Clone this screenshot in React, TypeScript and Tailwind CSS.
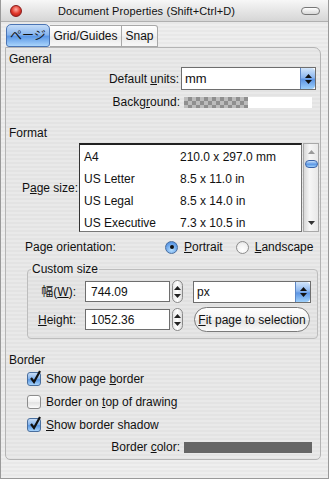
import React from "react";

const stripes =
  "bg-[repeating-linear-gradient(to_bottom,#eeeeee_0px,#eeeeee_2px,#e8e8e8_2px,#e8e8e8_4px)]";

function Up({ c = "#111" }: { c?: string }) {
  return (
    <svg width="7" height="4" viewBox="0 0 7 4">
      <path d="M0 4 L3.5 0 L7 4 Z" fill={c} />
    </svg>
  );
}
function Down({ c = "#111" }: { c?: string }) {
  return (
    <svg width="7" height="4" viewBox="0 0 7 4">
      <path d="M0 0 L3.5 4 L7 0 Z" fill={c} />
    </svg>
  );
}

function AquaArrow() {
  return (
    <div className="w-[15px] self-stretch rounded-r-[4px] border-l border-[#5d87c6] bg-[linear-gradient(to_bottom,#d3e6fb_0%,#8db7ef_45%,#5d95e4_55%,#9ed0fb_100%)] flex flex-col items-center justify-center gap-[2px]">
      <Up />
      <Down />
    </div>
  );
}

function Spinner() {
  return (
    <div className="w-[11px] h-[23px] rounded-full border border-[#8a8a8a] bg-[linear-gradient(to_right,#e8e8e8,#ffffff_50%,#dcdcdc)] flex flex-col items-center justify-center gap-[4px]">
      <Up c="#222" />
      <Down c="#222" />
    </div>
  );
}

function Check({ checked }: { checked: boolean }) {
  return (
    <div
      className={
        "relative w-[14px] h-[14px] rounded-[3px] border " +
        (checked
          ? "border-[#4a6f9e] bg-[linear-gradient(to_bottom,#c7ddf7_0%,#7fb0ea_50%,#5a98e4_55%,#a8d3fa_100%)]"
          : "border-[#8c8c8c] bg-[linear-gradient(to_bottom,#ffffff_0%,#f0f0f0_50%,#e2e2e2_55%,#fafafa_100%)]")
      }
    >
      {checked && (
        <svg
          className="absolute left-[1px] top-[-3px]"
          width="13"
          height="15"
          viewBox="0 0 13 15"
        >
          <path d="M2 8 L5 12 L11 1" stroke="#111" strokeWidth="2.2" fill="none" />
        </svg>
      )}
    </div>
  );
}

function Radio({ on }: { on: boolean }) {
  return (
    <div
      className={
        "w-[13px] h-[13px] rounded-full border flex items-center justify-center " +
        (on
          ? "border-[#4a6f9e] bg-[radial-gradient(circle_at_50%_70%,#b7e0ff_0%,#6aa4ea_60%,#3f7fd6_100%)]"
          : "border-[#8c8c8c] bg-[radial-gradient(circle_at_50%_70%,#ffffff_0%,#f2f2f2_60%,#d8d8d8_100%)]")
      }
    >
      {on && <div className="w-[4px] h-[4px] rounded-full bg-[#111]" />}
    </div>
  );
}

const rows: [string, string][] = [
  ["A4", "210.0 x 297.0 mm"],
  ["US Letter", "8.5 x 11.0 in"],
  ["US Legal", "8.5 x 14.0 in"],
  ["US Executive", "7.3 x 10.5 in"],
];

export default function App() {
  return (
    <div
      className={
        "w-[329px] h-[479px] overflow-hidden border-x border-b border-[#9a9a9a] text-[12px] leading-[14px] text-[#111] font-['Liberation_Sans','Noto_Sans_CJK_JP',sans-serif] flex flex-col " +
        stripes
      }
    >
      {/* title bar */}
      <div className="h-[22px] flex items-center bg-[linear-gradient(to_bottom,#f7f7f7,#e6e6e6_50%,#d6d6d6)] border-b border-[#b0b0b0] shrink-0">
        <div className="ml-[9px] w-[12px] h-[12px] rounded-full border border-[#8a1c1c] bg-[radial-gradient(circle_at_50%_35%,#ffb0a8_0%,#e23b2e_50%,#a8120c_100%)]" />
        <div className="ml-[36px] text-[11px] tracking-[0.1px]">Document Properties (Shift+Ctrl+D)</div>
        <div className="ml-auto mr-[8px] w-[19px] h-[8px] rounded-full border border-[#777] bg-[linear-gradient(to_bottom,#ffffff,#d8d8d8)]" />
      </div>

      {/* tabs */}
      <div className="flex items-end pl-[5px] mt-[2px] h-[23px] shrink-0">
        <div className="h-[23px] w-[44px] rounded-t-[5px] rounded-b-[3px] border border-[#4a74b4] bg-[linear-gradient(to_bottom,#c4dcf8_0%,#8ab6ee_45%,#5c98e6_55%,#a9d4fb_100%)] flex items-center justify-center text-[12px]">
          ページ
        </div>
        <div className="h-[22px] w-[72px] border-y border-r border-[#a8a8a8] bg-[linear-gradient(to_bottom,#ffffff,#f1f1f1_50%,#e9e9e9_55%,#f8f8f8)] flex items-center justify-center">
          Grid/Guides
        </div>
        <div className="h-[22px] w-[36px] border-y border-r border-[#a8a8a8] rounded-tr-[3px] bg-[linear-gradient(to_bottom,#ffffff,#f1f1f1_50%,#e9e9e9_55%,#f8f8f8)] flex items-center justify-center">
          Snap
        </div>
      </div>

      {/* panel */}
      <div
        className={
          "ml-[4px] mr-[7px] h-[413px] border border-[#b4b4b4] rounded-tr-[7px] rounded-b-[5px] flex flex-col shrink-0 bg-[repeating-linear-gradient(to_bottom,#e9e9e9_0px,#e9e9e9_2px,#e3e3e3_2px,#e3e3e3_4px)]"
        }
      >
        <div className="mt-[4px] pl-[3px] h-[14px]">General</div>

        {/* default units */}
        <div className="mt-[1px] h-[23px] flex items-center">
          <div className="w-[175px] text-right pr-[2px]">
            Default <u>u</u>nits:
          </div>
          <div className="w-[135px] h-[23px] border border-[#6e6e6e] bg-white flex items-center">
            <span className="pl-[3px] flex-1 text-[13px]">mm</span>
            <AquaArrow />
          </div>
        </div>

        {/* background */}
        <div className="mt-[6px] h-[12px] flex items-center">
          <div className="w-[178px] text-right pr-[4px]">
            Backg<u>r</u>ound:
          </div>
          <div className="w-[128px] h-[11px] bg-white flex">
            <div className="w-[64px] h-full bg-[conic-gradient(#8f8f8f_25%,#bcbcbc_0_50%,#8f8f8f_0_75%,#bcbcbc_0)] bg-[length:8px_8px]" />
          </div>
        </div>

        <div className="mt-[18px] pl-[3px] h-[14px]">Format</div>

        {/* page size list */}
        <div className="mt-[3px] h-[89px] flex items-center">
          <div className="w-[73px] text-right pr-[1px]">
            P<u>a</u>ge size:
          </div>
          <div className="w-[223px] h-[89px] border border-[#777] border-t-2 border-t-[#222] border-l-[#333] bg-white flex flex-col pt-[1px]">
            {rows.map(([a, b]) => (
              <div key={a} className="h-[22px] flex items-center shrink-0">
                <span className="pl-[4px] w-[100px]">{a}</span>
                <span>{b}</span>
              </div>
            ))}
          </div>
          <div className="ml-[1px] w-[16px] h-[89px] border border-[#a8a8a8] bg-[linear-gradient(to_right,#d8d8d8,#f6f6f6_40%,#e8e8e8)] flex flex-col items-center">
            <div className="mt-[6px]">
              <Up c="#9a9a9a" />
            </div>
            <div className="mt-[6px] w-[13px] h-[8px] rounded-full border border-[#3a63a8] bg-[linear-gradient(to_bottom,#c7e0fb,#5c98e6_55%,#9fd0fb)]" />
            <div className="mt-auto mb-[6px]">
              <Down c="#333" />
            </div>
          </div>
        </div>

        {/* orientation */}
        <div className="mt-[8px] h-[14px] flex items-center">
          <div className="pl-[19px] w-[159px]">Page orientation:</div>
          <Radio on />
          <span className="ml-[6px]">
            <u>P</u>ortrait
          </span>
          <div className="ml-[13px]">
            <Radio on={false} />
          </div>
          <span className="ml-[6px]">
            <u>L</u>andscape
          </span>
        </div>

        {/* custom size group */}
        <div className="relative mt-[15px] ml-[21px] mr-[2px] h-[70px] border border-[#bdbdbd] rounded-[4px] bg-[repeating-linear-gradient(to_bottom,#e6e6e6_0px,#e6e6e6_2px,#e0e0e0_2px,#e0e0e0_4px)] flex flex-col">
          <div className="absolute left-[3px] top-[-8px] px-[1px] bg-[#e7e7e7] leading-[14px]">Custom size</div>
          <div className="mt-[10px] h-[23px] flex items-center">
            <div className="w-[51px] text-right pr-[3px]">
              幅(<u>W</u>):
            </div>
            <div className="ml-[6px] w-[85px] h-[21px] border border-[#6e6e6e] bg-white flex items-center pl-[5px]">744.09</div>
            <div className="ml-[2px]">
              <Spinner />
            </div>
            <div className="ml-[10px] w-[118px] h-[22px] border border-[#6e6e6e] bg-white flex items-center">
              <span className="pl-[3px] flex-1">px</span>
              <AquaArrow />
            </div>
          </div>
          <div className="mt-[5px] h-[23px] flex items-center">
            <div className="w-[51px] text-right pr-[3px]">
              <u>H</u>eight:
            </div>
            <div className="ml-[6px] w-[85px] h-[21px] border border-[#6e6e6e] bg-white flex items-center pl-[5px]">1052.36</div>
            <div className="ml-[2px]">
              <Spinner />
            </div>
            <div className="ml-[11px] w-[116px] h-[25px] rounded-full border border-[#7a7a7a] bg-[linear-gradient(to_bottom,#ffffff,#f2f2f2_50%,#e3e3e3_55%,#fbfbfb)] flex items-center justify-center text-[12px]">
              <span>
                <u>F</u>it page to selection
              </span>
            </div>
          </div>
        </div>

        <div className="mt-[14px] pl-[3px] h-[14px]">Border</div>

        {[
          [true, <>Show page <u>b</u>order</>],
          [false, <>Border on <u>t</u>op of drawing</>],
          [true, <><u>S</u>how border shadow</>],
        ].map(([c, label], i) => (
          <div key={i} className={(i === 0 ? "mt-[0px] " : "") + "h-[23px] flex items-center pl-[21px]"}>
            <Check checked={c as boolean} />
            <span className="ml-[5px]">{label as React.ReactNode}</span>
          </div>
        ))}

        <div className="mt-[5px] h-[12px] flex items-center">
          <div className="w-[178px] text-right pr-[4px]">
            Border <u>c</u>olor:
          </div>
          <div className="w-[128px] h-[11px] bg-[#666666]" />
        </div>
      </div>
    </div>
  );
}
